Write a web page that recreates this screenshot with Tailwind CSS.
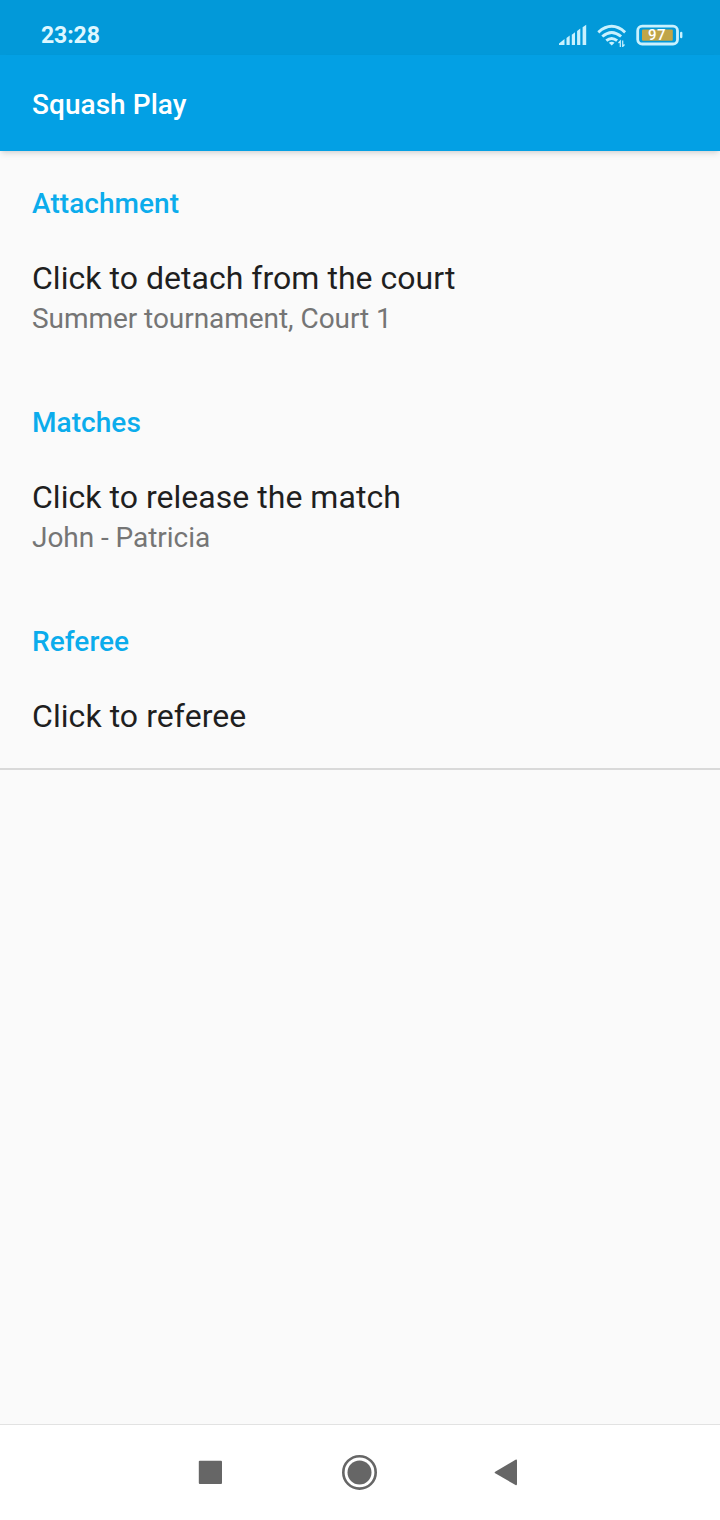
<!DOCTYPE html>
<html lang="en">
<head>
  <title>Squash Play</title>
  <meta charset="UTF-8" />
  <meta name="viewport" content="width=device-width, initial-scale=1.0"/>
  <script src="https://cdn.jsdelivr.net/npm/@tailwindcss/browser@4"></script>
</head>

<body class="bg-[#fafafa] h-[1520px] flex flex-col overflow-hidden font-[Roboto,sans-serif]">

  <!-- Status Bar -->
  <div class="h-[55px] shrink-0 bg-[#0299d9] text-[#c9f1fe] flex items-center justify-between pl-[41px] pr-[37px] pt-[15px]">
    <span class="pt-px text-[23px] leading-[24px] font-bold tracking-[-0.1px] text-[#ddf7ff]">23:28</span>
    <svg width="124" height="24" viewBox="0 0 124 24" fill="none">
      <!-- signal -->
      <path d="M0 22V20.500L5.500 16V22ZM7.500 22V15L10.700 12.500V22ZM12.800 22V11.800L16 9.300V22ZM18.100 22V8L21.300 5.500V22ZM23.600 22V4.300L27.200 1.800V22Z" fill="currentColor" />
      <!-- wifi -->
      <g stroke="currentColor" stroke-width="2.900">
        <path d="M39.300 9.300Q52.700 -2.600 66.100 9.300M43.300 13.500Q52.700 5.300 62.100 13.500M47.300 17.700Q52.700 13.300 58.100 17.700" />
      </g>
      <path d="M49.800 19.800Q52.700 17.600 55.600 19.800L52.700 22.600Z" fill="currentColor" />
      <path d="M61.300 24V18L59.500 20M63.700 17.500V23.500L65.500 21.500" stroke="currentColor" stroke-width="1.200" />
      <!-- battery -->
      <rect x="78.700" y="3.200" width="39.800" height="17.800" rx="4.500" stroke="currentColor" stroke-width="2.800" />
      <rect x="83" y="6.500" width="30.800" height="11.300" rx="1" fill="#c0a548" />
      <path d="M122.200 10v4" stroke="currentColor" stroke-width="2.400" stroke-linecap="round" />
      <text x="98" y="17.300" text-anchor="middle" font-size="15" font-weight="500" letter-spacing=".5" fill="#fff">97</text>
    </svg>
  </div>

  <!-- App Bar -->
  <header class="h-24 shrink-0 bg-[#03a0e4] text-white flex items-center px-8 pt-[3px] shadow-md">
    <h1 class="text-[28px] font-medium tracking-[0.05px]">Squash Play</h1>
  </header>

  <!-- Preferences -->
  <main class="grow text-[#1f1f1f]">
    <section class="h-[219px] px-8 pt-[33px]">
      <h2 class="text-[28px] leading-10 font-medium text-[#0bacec] tracking-[0.05px]">Attachment</h2>
      <p class="mt-[31px] text-[32px] leading-[46px] tracking-[0.03px]">Click to detach from the court</p>
      <p class="text-[28px] leading-9 text-[#757575] tracking-[-0.05px]">Summer tournament, Court 1</p>
    </section>
    <section class="h-[219px] px-8 pt-[33px]">
      <h2 class="text-[28px] leading-10 font-medium text-[#0bacec] tracking-[0.05px]">Matches</h2>
      <p class="mt-[31px] text-[32px] leading-[46px] tracking-[0.03px]">Click to release the match</p>
      <p class="text-[28px] leading-9 text-[#757575] tracking-[-0.05px]">John - Patricia</p>
    </section>
    <section class="h-[181px] px-8 pt-[33px] border-b-2 border-[#d9d9d9]">
      <h2 class="text-[28px] leading-10 font-medium text-[#0bacec] tracking-[0.05px]">Referee</h2>
      <p class="mt-[31px] text-[32px] leading-[46px] tracking-[0.06px]">Click to referee</p>
    </section>
  </main>

  <!-- Navigation Bar -->
  <nav class="h-24 shrink-0 bg-white border-t border-[#e2e2e2] flex items-center pl-[198px] pb-px text-[#666]">
    <svg width="24" height="24" viewBox="0 0 24 24"><rect x=".8" y=".7" width="23.200" height="23.200" rx="1" fill="currentColor" /></svg>
    <svg class="ml-[120px]" width="36" height="36" viewBox="0 0 36 36">
      <circle cx="17.500" cy="18.400" r="16.200" fill="none" stroke="currentColor" stroke-width="2.600" />
      <circle cx="17.500" cy="18.400" r="12" fill="currentColor" />
    </svg>
    <svg class="ml-[116px]" width="24" height="28" viewBox="0 0 24 28"><path d="M1.200 15.300Q0 14.500 1.200 13.700L21.500 1.800Q23 1.100 23 2.500V26.100Q23 27.700 21.500 27Z" fill="currentColor" /></svg>
  </nav>

</body>
</html>
